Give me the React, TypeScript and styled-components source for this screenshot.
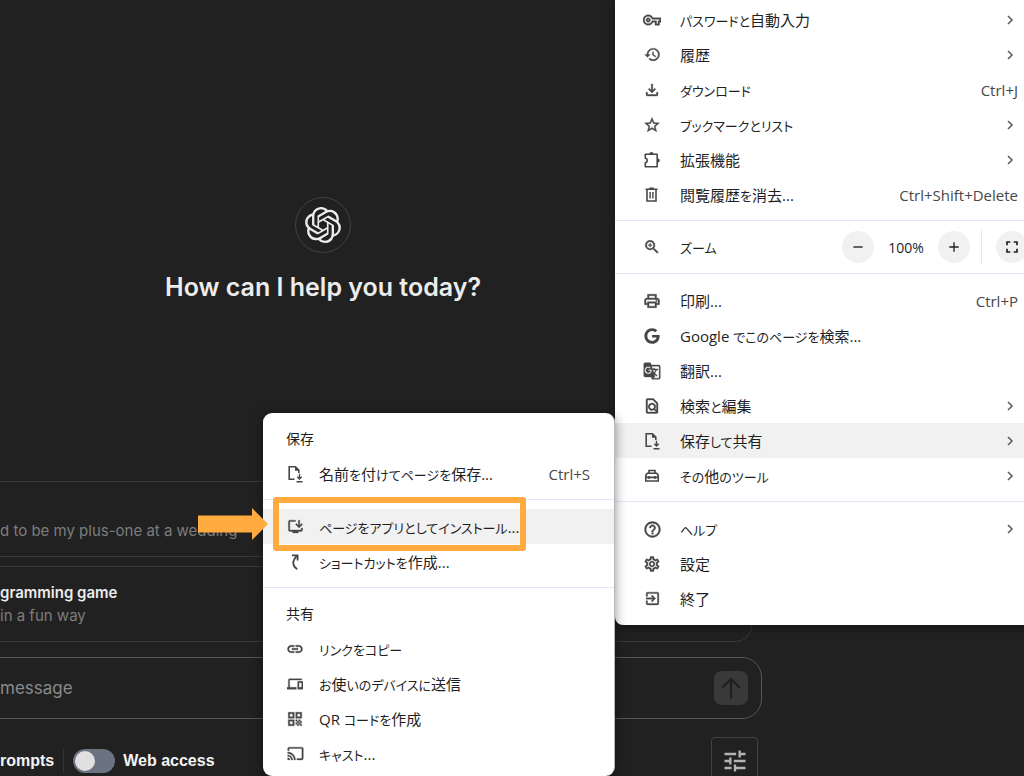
import React from "react";
import styled, { createGlobalStyle } from "styled-components";
import {
  MdAdd,
  MdCast,
  MdDevices,
  MdExitToApp,
  MdFullscreen,
  MdGTranslate,
  MdHelpOutline,
  MdHistory,
  MdLink,
  MdOutlineFileDownload,
  MdOutlineFindInPage,
  MdOutlineInstallDesktop,
  MdOutlinePrint,
  MdOutlineSettings,
  MdOutlineVpnKey,
  MdQrCode,
  MdRemove,
  MdStarOutline,
  MdTune,
  MdZoomIn,
} from "react-icons/md";
import { FaGoogle } from "react-icons/fa";
import { SiOpenai } from "react-icons/si";

const GlobalStyle = createGlobalStyle`
  *, *::before, *::after { box-sizing: border-box; }
  body {
    margin: 0;
    background: #212121;
    overflow: hidden;
  }
  button, input { font: inherit; color: inherit; }
`;

const uiFont = `"Open Sans", "Noto Sans CJK JP", sans-serif`;
const chatFont = `Inter, "Liberation Sans", sans-serif`;
const accent = "#ffab3f";

/* ---------- chat page ---------- */

const Page = styled.div`
  position: relative;
  height: 100vh;
  min-height: 776px;
  overflow: hidden;
  background: #212121;
  font-family: ${chatFont};
`;

const Chat = styled.main`
  display: flex;
  flex-direction: column;
  margin: 0 262px 0 -116px;
`;

const Hero = styled.section`
  display: flex;
  flex-direction: column;
  align-items: center;
  gap: 16px;
  height: 481px;
  padding-top: 197px;
`;

const Logo = styled.div`
  display: grid;
  place-items: center;
  width: 56px;
  height: 56px;
  border: 1px solid #424242;
  border-radius: 50%;
  color: #ececec;
`;

const Title = styled.h1`
  margin: 0;
  color: #ececec;
  font-size: 25px;
  font-weight: 600;
  line-height: 36px;
`;

const Suggestions = styled.div`
  display: flex;
  flex-direction: column;
  gap: 9px;
  margin: 0 10px 15px;
`;

const Suggestion = styled.button`
  display: flex;
  flex-direction: column;
  justify-content: center;
  height: 76px;
  padding: 0 16px 0 105px;
  border: 1px solid #383838;
  border-radius: 16px;
  background: none;
  color: #7d7d7d;
  font-size: 15px;
  line-height: 23px;
  text-align: left;
`;

const SuggestionTitle = styled.span`
  min-height: 23px;
  color: #ececec;
  font-weight: 600;
`;

const Composer = styled.form`
  display: flex;
  align-items: center;
  height: 62px;
  padding: 0 13px 0 115px;
  border: 1px solid #565656;
  border-radius: 20px;
`;

const Prompt = styled.input`
  flex: 1;
  min-width: 0;
  padding: 0;
  border: 0;
  outline: 0;
  background: none;
  font-size: 17px;
  &::placeholder { color: #8a8a8a; opacity: 1; }
`;

const Send = styled.button`
  display: grid;
  place-items: center;
  width: 34px;
  height: 34px;
  padding: 0;
  border: 0;
  border-radius: 8px;
  background: #393939;
  color: #1f1f1f;
`;

const Toolbar = styled.div`
  display: flex;
  align-items: center;
  height: 48px;
  margin-top: 18px;
  padding: 0 4px 0 116px;
  color: #f4f4f4;
  font-family: "Liberation Sans", sans-serif;
  font-size: 16px;
  font-weight: 700;
`;

const Divider = styled.span`
  width: 1px;
  height: 24px;
  margin: 0 9px;
  background: #333;
`;

const ToggleLabel = styled.label`
  display: flex;
  align-items: center;
  gap: 8px;
`;

const Toggle = styled.input`
  appearance: none;
  display: flex;
  align-items: center;
  width: 42px;
  height: 24px;
  margin: 0;
  padding: 0 2px;
  border-radius: 12px;
  background: #6b7280;
  &::before {
    content: "";
    width: 20px;
    height: 20px;
    border-radius: 50%;
    background: #e0e0e0;
  }
  &:checked { justify-content: flex-end; }
`;

const TuneButton = styled.button`
  display: grid;
  place-items: center;
  width: 47px;
  height: 48px;
  margin-left: auto;
  padding: 0;
  border: 1px solid #424242;
  border-radius: 4px;
  background: none;
  color: #b4b4b4;
`;

/* ---------- browser menus ---------- */

const Menu = styled.div`
  position: absolute;
  overflow: hidden;
  background: #fff;
  color: #1f1f1f;
  font-family: ${uiFont};
  font-size: 15px;
  font-feature-settings: "palt";
  box-shadow: 0 2px 12px rgba(0, 0, 0, 0.45);
`;

const MainMenu = styled(Menu)`
  top: 0;
  right: -24px;
  width: 433px;
  padding: 2px 0 9px;
  border-radius: 0 0 8px 8px;
`;

const SubMenu = styled(Menu)`
  top: 413px;
  right: 409px;
  width: 352px;
  padding: 9px 0 5px;
  border-right: 1px solid #b8b8b8;
  border-radius: 9px;
`;

const Row = styled.button<{ $active?: boolean; $sub?: boolean }>`
  display: flex;
  align-items: center;
  gap: ${(p) => (p.$sub ? 15 : 19)}px;
  width: 100%;
  height: 35px;
  padding: ${(p) => (p.$sub ? "0 24px 0 23px" : "0 30px 0 28px")};
  border: 0;
  background: ${(p) => (p.$active ? "#f1f1f1" : "none")};
  text-align: left;
  white-space: nowrap;
`;

const IconBox = styled.span`
  display: grid;
  place-items: center;
  flex: none;
  width: 18px;
  height: 18px;
  color: #474747;
  svg[stroke-width="0"] { stroke-width: 0.5px; }
  svg[stroke-width="0"] path[fill="none"] { stroke: none; }
`;

const Label = styled.span`
  flex: 1;
`;

const Kana = styled.span`
  font-size: 13px;
`;

const Shortcut = styled.span`
  color: #474747;
`;

const Separator = styled.hr`
  height: 1px;
  margin: 8px 0 9px;
  border: 0;
  background: #dfe9f8;
`;

const Heading = styled.div`
  height: 34px;
  padding: 0 23px;
  font-size: 14px;
  line-height: 34px;
`;

const ZoomRow = styled.div`
  display: flex;
  align-items: center;
  gap: 19px;
  height: 54px;
  margin: 8px 0 9px;
  padding: 0 20px 0 28px;
  border: 1px solid #dfe9f8;
  border-width: 1px 0;
`;

const ZoomControls = styled.div`
  display: flex;
  align-items: center;
`;

const Round = styled.button`
  display: grid;
  place-items: center;
  width: 32px;
  height: 32px;
  padding: 0;
  border: 0;
  border-radius: 50%;
  background: #f1f1f1;
`;

const Percent = styled.output`
  width: 64px;
  font-size: 14px;
  font-weight: 500;
  text-align: center;
`;

const ZoomDivider = styled.span`
  width: 1px;
  height: 34px;
  margin: 0 14px 0 11px;
  background: #dfe9f8;
`;

/* ---------- annotation ---------- */

const Highlight = styled.div`
  position: absolute;
  top: 497px;
  right: 498px;
  width: 253px;
  height: 54px;
  border: 6px solid ${accent};
  border-radius: 3px;
  pointer-events: none;
`;

const Arrow = styled.svg`
  position: absolute;
  top: 508px;
  right: 756px;
`;

/* ---------- drawn icons ---------- */

const SaveIcon = () => (
  <svg width="18" height="18" viewBox="0 0 18 18" fill="none" stroke="currentColor" strokeWidth="1.6">
    <path d="M8.500 14.200H3.200V1.800h6.200l3.400 3.400V8" />
    <path d="M9 1.500v4.200h4.200z" fill="currentColor" stroke="none" />
    <path d="M13.500 8.800v5M11.300 11.800l2.200 2.200 2.200-2.200M10.500 16.700h6" strokeWidth="1.4" />
  </svg>
);

const ShortcutIcon = () => (
  <svg width="18" height="18" viewBox="0 0 18 18" fill="none" stroke="currentColor" strokeWidth="1.8">
    <path d="M11.200 16.200C7 13.500 5.200 8.600 10.800 3" />
    <path d="M6 2.300h5.600v5.200" />
  </svg>
);

const PuzzleIcon = () => (
  <svg width="18" height="18" viewBox="0 0 18 18" fill="none" stroke="currentColor" strokeWidth="1.6" strokeLinejoin="round">
    <path d="M2.300 3.300h11.900v12.400H2.300v-3.900c2.600-.6 2.600-4.100 0-4.700z" />
    <path d="M6.400 3a2 2 0 0 1 4 0zM14.800 7.500a2 2 0 0 1 0 4z" fill="currentColor" stroke="none" />
  </svg>
);

const TrashIcon = () => (
  <svg width="18" height="18" viewBox="0 0 18 18" fill="none" stroke="currentColor" strokeWidth="1.6">
    <path d="M4 4v11h9V4M2.500 3.300h12M6.300 2.200h4.400" />
    <path d="M7.100 6v6.600M9.900 6v6.600" strokeWidth="1.4" />
  </svg>
);

const ToolboxIcon = () => (
  <svg width="18" height="18" viewBox="0 0 18 18" fill="none" stroke="currentColor" strokeWidth="1.6">
    <path d="M6 6V3.500h6V6M2.800 14V8.300L4.300 6.200h9.400l1.500 2.100V14zM2.500 10.400h13M6 9v3M12 9v3" />
  </svg>
);

const Chevron = () => (
  <svg width="14" height="10" viewBox="0 0 14 10" fill="none" stroke="#5f5f5f" strokeWidth="1.6">
    <path d="M4 1l4 4-4 4" />
  </svg>
);

const SendArrow = () => (
  <svg width="22" height="24" viewBox="0 0 22 24" fill="none" stroke="currentColor" strokeWidth="2.2" strokeLinecap="round" strokeLinejoin="round">
    <path d="M11 22V3M3 11l8-8 8 8" />
  </svg>
);

/* Kana are set smaller than the kanji and Latin letters around them. */
const JaText = ({ text }: { text: string }) => (
  <>
    {text
      .split(/([\u3041-\u30ff]+)/)
      .map((part, i) => (i % 2 ? <Kana key={i}>{part}</Kana> : part))}
  </>
);

type ItemProps = {
  icon: React.ReactNode;
  label: string;
  keys?: string;
  more?: boolean;
  active?: boolean;
  sub?: boolean;
};

const Item = ({ icon, label, keys, more, active, sub }: ItemProps) => (
  <Row type="button" role="menuitem" $active={active} $sub={sub}>
    <IconBox>{icon}</IconBox>
    <Label>
      <JaText text={label} />
    </Label>
    {keys && <Shortcut>{keys}</Shortcut>}
    {more && <Chevron />}
  </Row>
);

export default function App() {
  return (
    <Page>
      <GlobalStyle />
      <Chat>
        <Hero>
          <Logo>
            <SiOpenai size={36} />
          </Logo>
          <Title>How can I help you today?</Title>
        </Hero>
        <Suggestions>
          <Suggestion type="button">
            <SuggestionTitle />
            <span>d to be my plus-one at a wedding</span>
          </Suggestion>
          <Suggestion type="button">
            <SuggestionTitle>gramming game</SuggestionTitle>
            <span>in a fun way</span>
          </Suggestion>
        </Suggestions>
        <Composer>
          <Prompt type="text" placeholder="message" aria-label="message" />
          <Send type="button" aria-label="Send">
            <SendArrow />
          </Send>
        </Composer>
        <Toolbar>
          <span>rompts</span>
          <Divider />
          <ToggleLabel>
            <Toggle type="checkbox" role="switch" />
            Web access
          </ToggleLabel>
          <TuneButton type="button" aria-label="Settings">
            <MdTune size={28} />
          </TuneButton>
        </Toolbar>
      </Chat>

      <MainMenu role="menu">
        <Item icon={<MdOutlineVpnKey size={18} />} label="パスワードと自動入力" more />
        <Item icon={<MdHistory size={17} />} label="履歴" more />
        <Item icon={<MdOutlineFileDownload size={18} />} label="ダウンロード" keys="Ctrl+J" />
        <Item icon={<MdStarOutline size={18} />} label="ブックマークとリスト" more />
        <Item icon={<PuzzleIcon />} label="拡張機能" more />
        <Item icon={<TrashIcon />} label="閲覧履歴を消去..." keys="Ctrl+Shift+Delete" />
        <ZoomRow>
          <IconBox>
            <MdZoomIn size={18} />
          </IconBox>
          <Label>
            <JaText text="ズーム" />
          </Label>
          <ZoomControls>
            <Round type="button" aria-label="Zoom out">
              <MdRemove size={16} />
            </Round>
            <Percent>100%</Percent>
            <Round type="button" aria-label="Zoom in">
              <MdAdd size={16} />
            </Round>
            <ZoomDivider />
            <Round type="button" aria-label="Full screen">
              <MdFullscreen size={20} />
            </Round>
          </ZoomControls>
        </ZoomRow>
        <Item icon={<MdOutlinePrint size={18} />} label="印刷..." keys="Ctrl+P" />
        <Item icon={<FaGoogle size={16} />} label="Google でこのページを検索..." />
        <Item icon={<MdGTranslate size={18} />} label="翻訳..." />
        <Item icon={<MdOutlineFindInPage size={18} />} label="検索と編集" more />
        <Item icon={<SaveIcon />} label="保存して共有" more active />
        <Item icon={<ToolboxIcon />} label="その他のツール" more />
        <Separator />
        <Item icon={<MdHelpOutline size={19} />} label="ヘルプ" more />
        <Item icon={<MdOutlineSettings size={18} />} label="設定" />
        <Item icon={<MdExitToApp size={17} />} label="終了" />
      </MainMenu>

      <SubMenu role="menu">
        <Heading>保存</Heading>
        <Item sub icon={<SaveIcon />} label="名前を付けてページを保存..." keys="Ctrl+S" />
        <Separator />
        <Item sub active icon={<MdOutlineInstallDesktop size={17} />} label="ページをアプリとしてインストール..." />
        <Item sub icon={<ShortcutIcon />} label="ショートカットを作成..." />
        <Separator />
        <Heading>共有</Heading>
        <Item sub icon={<MdLink size={18} />} label="リンクをコピー" />
        <Item sub icon={<MdDevices size={16} />} label="お使いのデバイスに送信" />
        <Item sub icon={<MdQrCode size={18} />} label="QR コードを作成" />
        <Item sub icon={<MdCast size={17} />} label="キャスト..." />
      </SubMenu>

      <Highlight />
      <Arrow width="70" height="32" viewBox="0 0 70 32" fill={accent} aria-hidden="true">
        <path d="M0 7.500h54V0l16 16-16 16v-7.500H0z" />
      </Arrow>
    </Page>
  );
}
